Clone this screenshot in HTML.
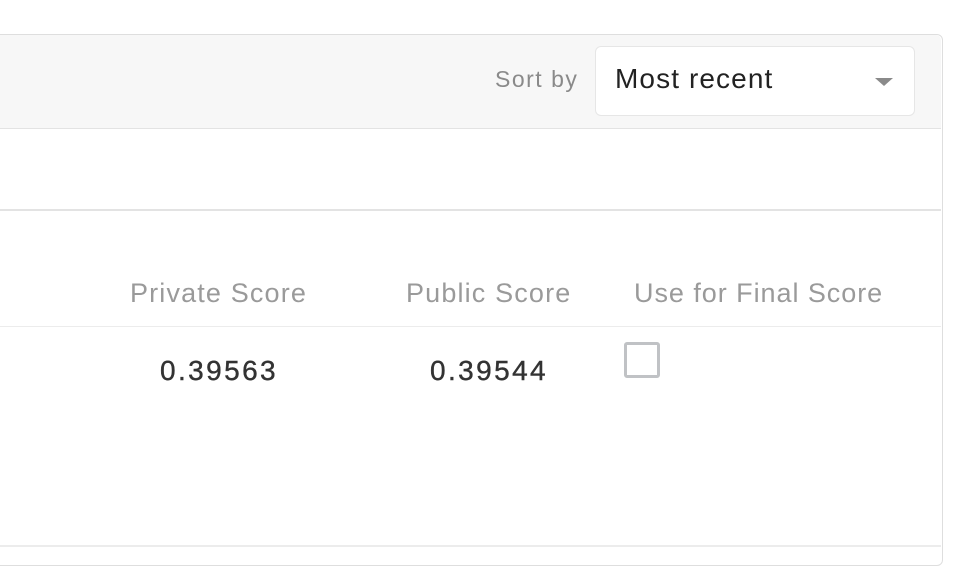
<!DOCTYPE html>
<html><head><meta charset="utf-8"><style>
body{margin:0;width:974px;height:552px;background:#fff;font-family:"Liberation Sans",sans-serif;position:relative;overflow:hidden}
.abs{position:absolute;white-space:nowrap}
</style></head><body>
<div class="abs" style="left:-10px;top:34px;width:951px;height:530px;border:1px solid #dedede;border-radius:6px;"></div>
<div class="abs" style="left:0;top:35px;width:941px;height:93px;background:#f7f7f7;border-top-right-radius:5px;border-bottom:1px solid #e3e3e3"></div>
<div class="abs" style="left:495px;top:66px;font-size:23px;color:#8a8a8a;letter-spacing:1.5px">Sort by</div>
<div class="abs" style="left:595px;top:46px;width:318px;height:68px;background:#fff;border:1px solid #e6e6e6;border-radius:6px"></div>
<div class="abs" style="left:615px;top:63px;font-size:28px;color:#222;letter-spacing:1.1px">Most recent</div>
<div class="abs" style="left:875px;top:78px;width:0;height:0;border-left:9px solid transparent;border-right:9px solid transparent;border-top:8px solid #8a8a8a"></div>
<div class="abs" style="left:0;top:209px;width:941px;height:2px;background:#e3e3e3"></div>
<div class="abs" style="left:130px;top:278px;font-size:27px;color:#9a9a9a;letter-spacing:1.15px">Private Score</div>
<div class="abs" style="left:406px;top:278px;font-size:27px;color:#9a9a9a;letter-spacing:1.15px">Public Score</div>
<div class="abs" style="left:634px;top:278px;font-size:27px;color:#9a9a9a;letter-spacing:0.95px">Use for Final Score</div>
<div class="abs" style="left:0;top:326px;width:941px;height:1px;background:#ececec"></div>
<div class="abs" style="left:160px;top:355px;font-size:28px;color:#333;letter-spacing:2.4px;-webkit-text-stroke:0.4px #333">0.39563</div>
<div class="abs" style="left:430px;top:355px;font-size:28px;color:#333;letter-spacing:2.4px;-webkit-text-stroke:0.4px #333">0.39544</div>
<div class="abs" style="left:624px;top:342px;width:30px;height:30px;border:3px solid #c0c2c5;border-radius:3px"></div>
<div class="abs" style="left:0;top:545px;width:941px;height:2px;background:#ececec"></div>
</body></html>
